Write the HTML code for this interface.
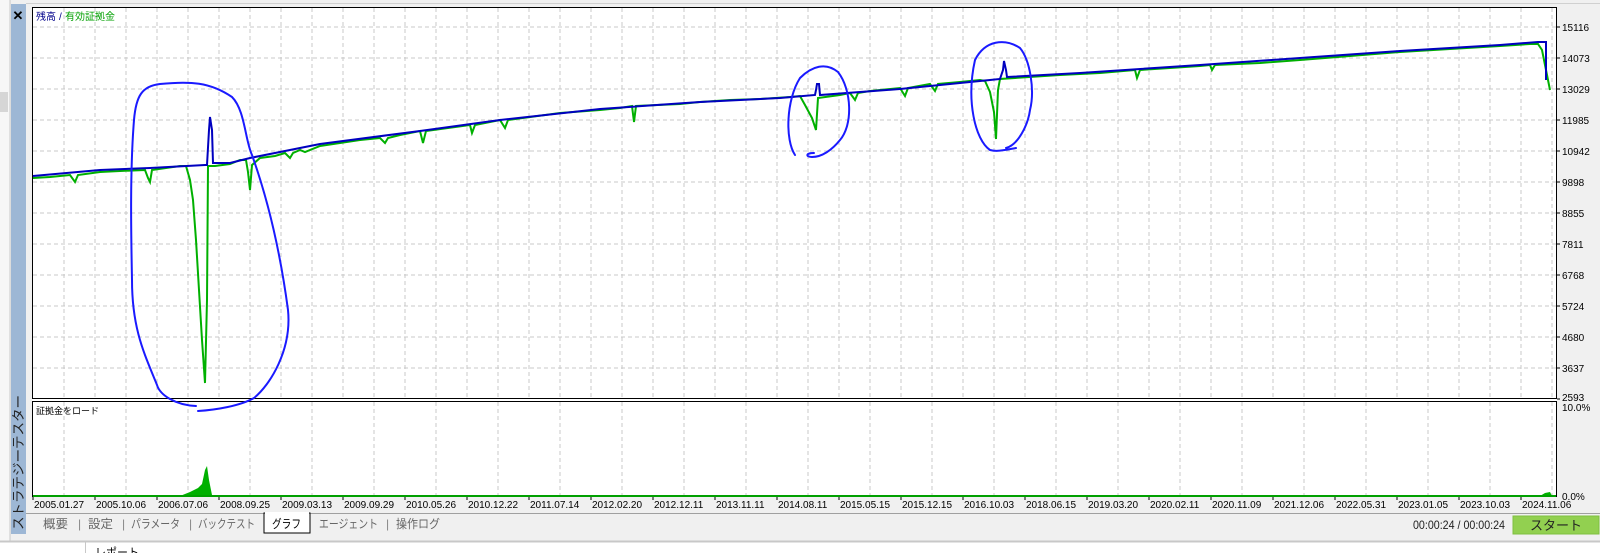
<!DOCTYPE html>
<html><head><meta charset="utf-8"><style>
html,body{margin:0;padding:0;width:1600px;height:553px;overflow:hidden;background:#f0f0f0;font-family:"Liberation Sans","Noto Sans CJK JP",sans-serif;}
svg{position:absolute;left:0;top:0}
</style></head><body>
<svg width="1600" height="553" xmlns="http://www.w3.org/2000/svg" font-family="Liberation Sans, Noto Sans CJK JP, sans-serif">
<rect x="0" y="0" width="1600" height="553" fill="#f0f0f0"/>
<rect x="0" y="0" width="10" height="553" fill="#f7f7f7"/>
<line x1="10" y1="0" x2="10" y2="553" stroke="#c8c8c8"/>
<rect x="0" y="92" width="8" height="20" fill="#d6d6d6"/>
<rect x="11" y="4" width="15" height="530" fill="#9db7d5"/>
<text x="18" y="20" font-size="13" font-weight="bold" text-anchor="middle" fill="#000">✕</text>
<text transform="translate(23,530) rotate(-90)" font-size="13" fill="#222" textLength="135" lengthAdjust="spacingAndGlyphs">ストラテジーテスター</text>
<rect x="26" y="3" width="1574" height="1" fill="#d0d0d0"/>
<rect x="32" y="7" width="1525" height="490" fill="#fff"/>
<g stroke="#c8c8c8" stroke-dasharray="4,3" stroke-width="1">
<path d="M64 8V398M95 8V398M126 8V398M157 8V398M188 8V398M219 8V398M250 8V398M281 8V398M312 8V398M343 8V398M374 8V398M405 8V398M436 8V398M467 8V398M498 8V398M529 8V398M560 8V398M591 8V398M622 8V398M653 8V398M684 8V398M715 8V398M746 8V398M777 8V398M808 8V398M839 8V398M870 8V398M901 8V398M932 8V398M963 8V398M994 8V398M1025 8V398M1056 8V398M1087 8V398M1118 8V398M1149 8V398M1180 8V398M1211 8V398M1242 8V398M1273 8V398M1304 8V398M1335 8V398M1366 8V398M1397 8V398M1428 8V398M1459 8V398M1490 8V398M1521 8V398M1552 8V398"/>
<path d="M64 402V496M126 402V496M188 402V496M250 402V496M312 402V496M374 402V496M436 402V496M498 402V496M560 402V496M622 402V496M684 402V496M746 402V496M808 402V496M870 402V496M932 402V496M994 402V496M1056 402V496M1118 402V496M1180 402V496M1242 402V496M1304 402V496M1366 402V496M1428 402V496M1490 402V496M1552 402V496"/>
<path d="M33 27H1556M33 58H1556M33 89H1556M33 120H1556M33 151H1556M33 182H1556M33 213H1556M33 244H1556M33 275H1556M33 306H1556M33 337H1556M33 368H1556"/>
</g>
<rect x="32.5" y="7.5" width="1524" height="391" fill="none" stroke="#000"/>
<rect x="32.5" y="401.5" width="1524" height="95" fill="none" stroke="#000"/>
<text x="36" y="20" font-size="10" fill="#00008b">残高</text><text x="59" y="20" font-size="10" fill="#00008b">/</text><text x="65" y="20" font-size="10" fill="#00a000">有効証拠金</text>
<text x="36" y="414" font-size="9" fill="#000">証拠金をロード</text>
<polyline fill="none" stroke="#00b000" stroke-width="2" points="33,178 50,177 60,176 70,175 75,182 78,175 100,172 120,171 145,170 148,178 150,182 152,170 180,166 186,166 190,180 193,200 196,240 199,290 202,340 205,383 207,300 208,166 215,166 230,164 240,160 246,160 248,172 250,190 252,165 260,158 275,156 285,153 290,158 293,153 300,150 305,152 320,146 360,140 380,138 385,143 388,138 400,135 420,131 423,143 426,131 470,125 472,133 475,125 500,120 505,128 508,120 560,113 600,110 620,108 632,106 634,122 636,106 680,104 700,102 730,100 760,99 790,97 800,96 805,105 812,118 816,130 818,98 840,95 850,93 855,100 858,93 870,91 900,88 905,96 908,88 930,84 935,91 938,84 960,82 980,80 985,81 990,92 994,112 996,139 998,90 1000,79 1060,75 1100,73 1135,70 1137,78 1140,70 1170,68 1200,66 1210,65 1212,70 1215,65 1260,63 1300,60 1350,56 1400,52 1450,49 1500,46 1530,44 1538,44 1542,50 1545,65 1548,80 1550,90"/>
<polyline fill="none" stroke="#0000c0" stroke-width="2" points="33,176 100,170 150,168 205,165 207,165 209,130 210,117 212,130 213,163 230,163 250,158 320,144 420,131 500,120 600,109 700,102 780,98 815,95 816,90 817,84 819,84 820,95 900,89 990,80 1000,79 1003,70 1004,61 1006,70 1007,77 1080,73 1200,65 1300,58 1400,51 1500,45 1538,42 1546,42 1546,80"/>
<g fill="none" stroke="#1a1aff" stroke-width="2" stroke-linecap="round">
<path d="M196 406 C175 405 160 395 157 385 C145 355 132 330 132 280 C131 230 130 170 134 120 C136 96 142 86 160 84 C190 81 210 82 232 97 C245 110 245 140 252 155 C268 200 280 250 288 310 C292 350 270 385 254 398 C240 406 215 410 198 411"/>
<path d="M795 155 C785 140 786 100 800 78 C812 66 826 62 838 72 C852 90 853 125 840 140 C832 150 822 157 812 157 C806 157 805 153 814 153"/>
<path d="M1016 148 C1005 150 997 152 990 150 C975 140 966 100 975 60 C985 40 1005 38 1020 48 C1030 60 1035 90 1030 110 C1028 125 1018 145 1006 148"/>
</g>
<polygon fill="#00b000" points="33,496 180,496 190,492 198,488 202,484 205,470 207,466 209,480 212,495 215,496 1540,496 1545,493 1550,492 1552,496"/>
<line x1="33" y1="496" x2="1556" y2="496" stroke="#00a000" stroke-width="2"/>
<g font-size="10" fill="#000">
<text x="1562" y="31">15116</text><text x="1562" y="62">14073</text><text x="1562" y="93">13029</text><text x="1562" y="124">11985</text><text x="1562" y="155">10942</text><text x="1562" y="186">9898</text><text x="1562" y="217">8855</text><text x="1562" y="248">7811</text><text x="1562" y="279">6768</text><text x="1562" y="310">5724</text><text x="1562" y="341">4680</text><text x="1562" y="372">3637</text><text x="1562" y="401">2593</text>
<text x="1562" y="411">10.0%</text><text x="1562" y="500">0.0%</text>
</g>
<g stroke="#000"><path d="M1557 27h3M1557 58h3M1557 89h3M1557 120h3M1557 151h3M1557 182h3M1557 213h3M1557 244h3M1557 275h3M1557 306h3M1557 337h3M1557 368h3M1557 399h3"/></g>
<g font-size="10" fill="#000">
<text x="34" y="508">2005.01.27</text><text x="96" y="508">2005.10.06</text><text x="158" y="508">2006.07.06</text><text x="220" y="508">2008.09.25</text><text x="282" y="508">2009.03.13</text><text x="344" y="508">2009.09.29</text><text x="406" y="508">2010.05.26</text><text x="468" y="508">2010.12.22</text><text x="530" y="508">2011.07.14</text><text x="592" y="508">2012.02.20</text><text x="654" y="508">2012.12.11</text><text x="716" y="508">2013.11.11</text><text x="778" y="508">2014.08.11</text><text x="840" y="508">2015.05.15</text><text x="902" y="508">2015.12.15</text><text x="964" y="508">2016.10.03</text><text x="1026" y="508">2018.06.15</text><text x="1088" y="508">2019.03.20</text><text x="1150" y="508">2020.02.11</text><text x="1212" y="508">2020.11.09</text><text x="1274" y="508">2021.12.06</text><text x="1336" y="508">2022.05.31</text><text x="1398" y="508">2023.01.05</text><text x="1460" y="508">2023.10.03</text><text x="1522" y="508">2024.11.06</text>
</g>
<g stroke="#000"><path d="M33 497v3M95 497v3M157 497v3M219 497v3M281 497v3M343 497v3M405 497v3M467 497v3M529 497v3M591 497v3M653 497v3M715 497v3M777 497v3M839 497v3M901 497v3M963 497v3M1025 497v3M1087 497v3M1149 497v3M1211 497v3M1273 497v3M1335 497v3M1397 497v3M1459 497v3M1521 497v3"/></g>
<line x1="26" y1="513.5" x2="1600" y2="513.5" stroke="#a0a0a0"/>
<rect x="264" y="513" width="46" height="20" fill="#fff" stroke="#000"/>
<rect x="265" y="512" width="44" height="2" fill="#fff"/>
<g font-size="12" fill="#666">
<text x="43" y="528" textLength="25" lengthAdjust="spacingAndGlyphs">概要</text><text x="78" y="528" fill="#888">|</text>
<text x="88" y="528" textLength="25" lengthAdjust="spacingAndGlyphs">設定</text><text x="122" y="528" fill="#888">|</text>
<text x="131" y="528" textLength="49" lengthAdjust="spacingAndGlyphs">パラメータ</text><text x="189" y="528" fill="#888">|</text>
<text x="198" y="528" textLength="57" lengthAdjust="spacingAndGlyphs">バックテスト</text>
<text x="272" y="528" fill="#000" textLength="29" lengthAdjust="spacingAndGlyphs">グラフ</text>
<text x="319" y="528" textLength="59" lengthAdjust="spacingAndGlyphs">エージェント</text><text x="386" y="528" fill="#888">|</text>
<text x="396" y="528" textLength="44" lengthAdjust="spacingAndGlyphs">操作ログ</text>
<text x="1413" y="529" fill="#222" textLength="92" lengthAdjust="spacingAndGlyphs">00:00:24 / 00:00:24</text>
</g>
<rect x="1513" y="516" width="86" height="18" fill="#92d050" stroke="#7fbf40"/>
<text x="1556" y="530" font-size="13" text-anchor="middle" fill="#222">スタート</text>
<rect x="0" y="541" width="1600" height="12" fill="#fff"/>
<line x1="0" y1="541.5" x2="1600" y2="541.5" stroke="#c8c8c8" stroke-width="2"/>
<line x1="85.5" y1="542" x2="85.5" y2="553" stroke="#c8c8c8"/>
<text x="95" y="556" font-size="11" fill="#000">レポート</text>
</svg>
</body></html>
